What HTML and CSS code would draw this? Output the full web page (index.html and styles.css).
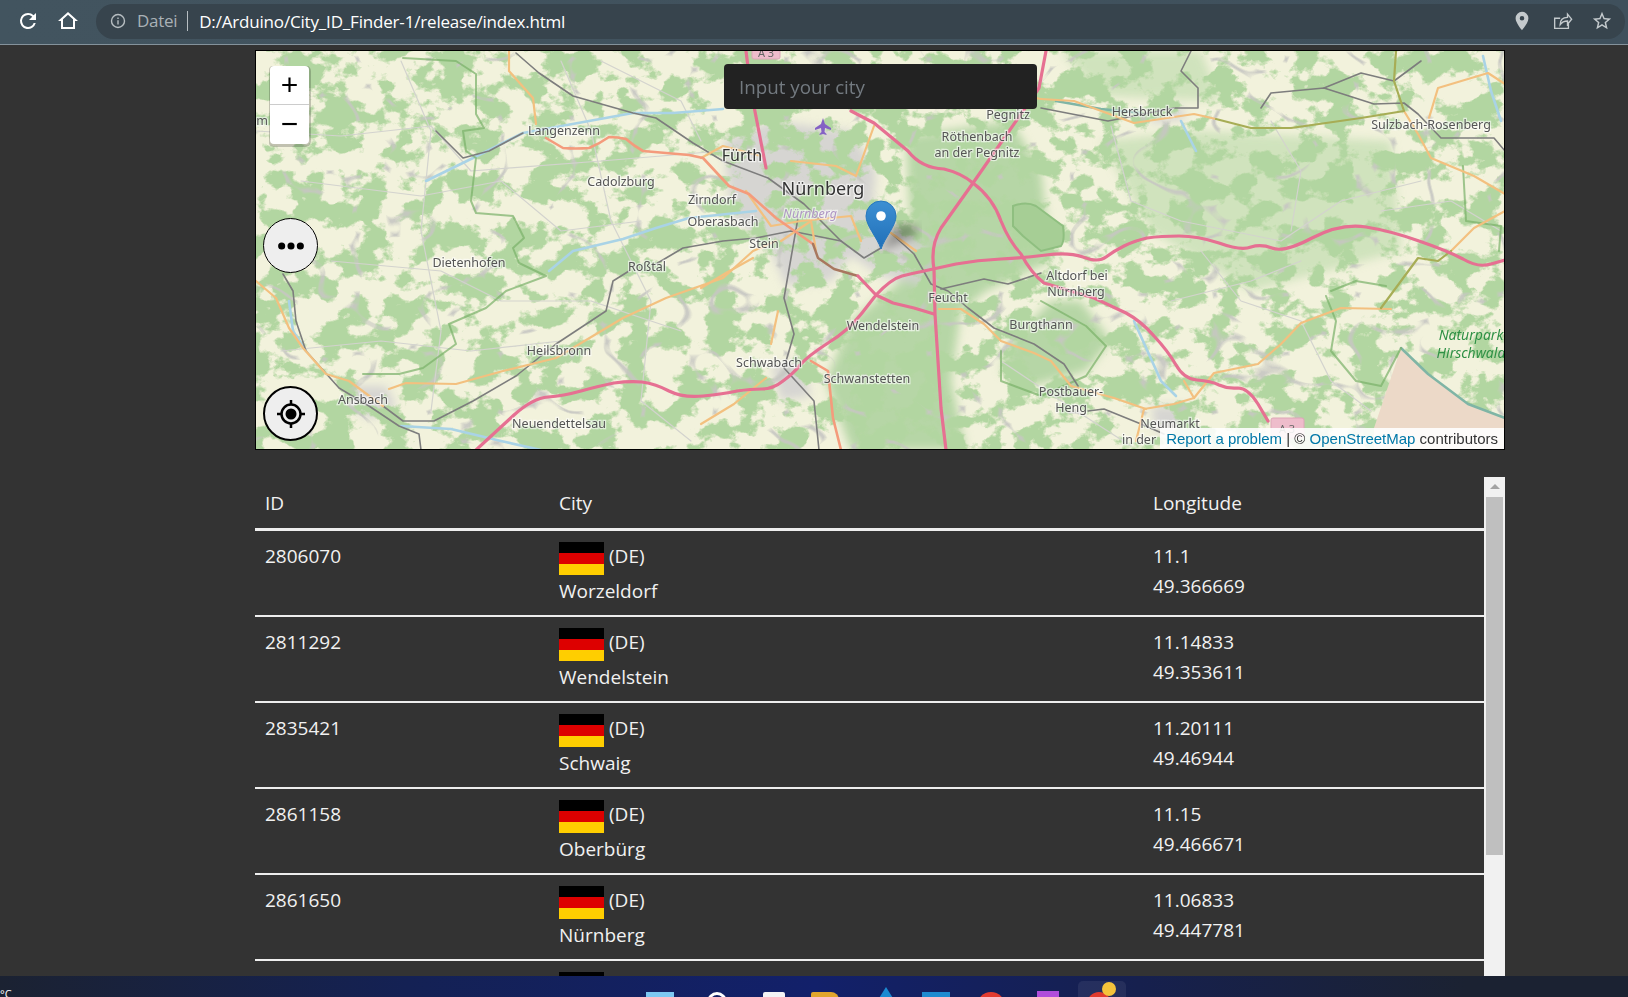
FILE: index.html
```html
<!DOCTYPE html>
<html lang="en">
<head>
    <meta charset="UTF-8">
    <title>City ID Finder</title>
    <link rel="stylesheet" href="styles.css">
</head>
<body>

<header class="toolbar">
    <svg class="tool-icon reload" viewBox="0 0 24 24"><path d="M17.65 6.35A7.95 7.95 0 0 0 12 4a8 8 0 1 0 7.73 10h-2.08A6 6 0 1 1 12 6c1.66 0 3.14.69 4.22 1.78L13 11h7V4l-2.35 2.35z"/></svg>
    <svg class="tool-icon home" viewBox="0 0 24 24"><path d="M12 5.7l5 4.5V18H7v-7.8l5-4.5M12 3L2 12h3v8h14v-8h3L12 3z"/></svg>
    <div class="omnibox">
        <svg class="info-icon" viewBox="0 0 16 16"><circle cx="8" cy="8" r="6.5"/><path d="M8 4.4v1.6M8 7.2v4.4"/></svg>
        <span class="scheme">Datei</span>
        <span class="url">D:/Arduino/City_ID_Finder-1/release/index.html</span>
        <span class="omni-actions">
            <svg class="omni-icon" viewBox="0 0 24 24"><path d="M12 2a7 7 0 0 0-7 7c0 5.2 7 13 7 13s7-7.800 7-13a7 7 0 0 0-7-7zm0 9.500a2.500 2.500 0 1 1 0-5 2.500 2.500 0 0 1 0 5z"/></svg>
            <svg class="omni-icon" viewBox="0 0 24 24"><path class="icon-line" d="M19 14v6H4V9h6M10 16c0-5 3-8 8-8V4.500l4.500 5.500-4.500 5.500V12c-3.500 0-6 1-8 4z"/></svg>
            <svg class="omni-icon" viewBox="0 0 24 24"><path d="M22 9.240l-7.190-.62L12 2 9.190 8.630 2 9.240l5.460 4.730L5.820 21 12 17.270 18.180 21l-1.630-7.030L22 9.240zM12 15.400l-3.760 2.270 1-4.280-3.320-2.880 4.380-.38L12 6.100l1.710 4.040 4.380.38-3.320 2.880 1 4.280L12 15.400z"/></svg>
        </span>
    </div>
</header>

<main class="content">
    <section class="map">
        <svg class="map-canvas" viewBox="255 50 1248 398">
            <defs>
                <filter id="woods" x="0" y="0" width="100%" height="100%" color-interpolation-filters="sRGB">
                    <feTurbulence type="fractalNoise" baseFrequency="0.034 0.04" numOctaves="5" seed="11"/>
                    <feColorMatrix values="0 0 0 0 0.70  0 0 0 0 0.84  0 0 0 0 0.63  12 0 0 0 -5.700"/>
                    <feGaussianBlur stdDeviation="0.6"/>
                </filter>
                <filter id="lanes" x="0" y="0" width="100%" height="100%" color-interpolation-filters="sRGB">
                    <feTurbulence type="turbulence" baseFrequency="0.014 0.017" numOctaves="2" seed="4"/>
                    <feColorMatrix values="0 0 0 0 0.78  0 0 0 0 0.78  0 0 0 0 0.76  0 0 0 -18 1.300"/>
                </filter>
                <filter id="soft"><feGaussianBlur stdDeviation="5"/></filter>
                <filter id="edge"><feGaussianBlur stdDeviation="5"/></filter>
                <filter id="fuzz"><feGaussianBlur stdDeviation="0.4"/></filter>
                <linearGradient id="pin" x1="0" y1="0" x2="0" y2="1">
                    <stop offset="0" stop-color="#3c8fd3"/>
                    <stop offset="1" stop-color="#2170b8"/>
                </linearGradient>
            </defs>

            <rect class="land" x="255" y="50" width="1249" height="399"/>

            <!-- big forest and town areas -->
            <g filter="url(#edge)">
                <path class="forest" d="M905 135 L1010 120 L1040 170 L1050 260 L985 290 L960 310 L950 380 L965 449 L850 449 L825 380 L850 320 L900 280 L910 230 Z"/>
                <path class="forest light" d="M1200 130 L1390 140 L1400 250 L1250 290 L1150 230 L1100 140 Z"/>
                <path class="forest light" d="M1060 50 L1200 50 L1220 100 L1100 95 Z"/>
                <path class="forest" d="M1050 300 L1080 300 L1110 340 L1085 370 L1030 385 L1000 370 L1010 340 Z"/>
                <path class="town" d="M722 140 L770 120 L850 130 L875 170 L872 205 L925 245 L925 285 L880 275 L850 255 L830 280 L785 285 L770 250 L730 215 Z"/>
                <path class="town" d="M352 385 L385 385 L395 405 L370 418 L345 405 Z"/>
                <path class="town" d="M1150 405 L1190 405 L1185 432 L1155 432 Z"/>
                <path class="town" d="M1150 108 L1180 105 L1185 118 L1150 122 Z"/>
                <path class="town" d="M770 365 L800 360 L810 395 L780 400 Z"/>
            </g>
            <rect x="255" y="50" width="1249" height="399" filter="url(#woods)"/>
            <rect class="lane-layer" x="255" y="50" width="1249" height="399" filter="url(#lanes)"/>
            <path class="forest dark" d="M1012 205 Q1025 200 1035 205 L1062 225 Q1064 240 1060 245 L1040 250 L1022 235 L1012 225 Z"/>
            <path class="park" d="M1373 427 L1400 347 L1427 373 L1467 403 L1504 417 L1504 449 L1373 449 Z"/>

            <g class="roads" filter="url(#fuzz)">
                <path class="minor" d="M255 130 L340 135 L430 125 L470 170 L600 160 L720 150"/>
                <path class="minor" d="M300 180 L420 195 L500 180 L560 230 L640 220"/>
                <path class="minor" d="M330 260 L440 270 L500 300 L590 300 L680 330"/>
                <path class="minor" d="M280 350 L380 340 L470 350 L560 340"/>
                <path class="minor" d="M560 60 L590 130 L610 220 L650 300 L640 400 L690 440"/>
                <path class="minor" d="M400 60 L430 130 L420 230 L440 330 L430 410"/>
                <path class="minor" d="M600 60 L680 100 L700 140"/>
                <path class="minor" d="M1110 125 L1130 200 L1180 220 L1280 240 L1340 200 L1420 180"/>
                <path class="minor" d="M1200 250 L1240 300 L1300 320 L1330 380 L1370 410"/>
                <path class="minor" d="M1270 120 L1300 170 L1290 230"/>
                <path class="minor" d="M1380 210 L1450 200 L1500 230"/>
                <path class="minor" d="M1170 300 L1250 280 L1300 260"/>
                <path class="minor" d="M1000 360 L1060 400 L1130 445"/>

                <path class="river" d="M425 180 L472 157 L522 132 L588 120 L632 112 L672 112 L722 108"/>
                <path class="river" d="M548 270 L572 250 L622 238 L655 227 L688 217 L755 210"/>
                <path class="river" d="M288 300 L292 330 L305 350"/>
                <path class="river" d="M400 425 L450 428 L500 440 L540 449"/>
                <path class="river" d="M1133 320 L1160 380 L1175 395"/>
                <path class="river" d="M1180 120 L1190 140 L1195 150"/>
                <path class="river" d="M1482 55 L1490 90 L1500 120"/>
                <path class="river teal" d="M1400 347 L1427 373 L1467 403 L1504 417"/>
                <path class="river teal" d="M1055 100 L1100 108 L1140 112"/>

                <path class="boundary" d="M402 57 L455 60 L475 73 L475 113 L483 127 L462 130 L465 150 L475 157 L470 200 L475 212 L512 215 L523 237 L512 247 L518 262 L545 275 L505 290 L485 307 L448 323 L455 343 L422 367 L398 373 L362 373"/>
                <path class="boundary" d="M1462 165 L1465 220 L1500 225 L1498 250"/>
                <path class="boundary" d="M1330 290 L1355 280 L1385 285 M1325 295 L1335 320 L1330 350 L1355 380 L1380 385 L1400 347"/>
                <path class="boundary" d="M1040 300 L1085 325 L1105 345 L1085 375 L1040 395 L1000 380 L1000 350"/>

                <path class="rail" d="M515 52 L538 72 L572 95 L632 112 L655 117 L692 142 L722 160 L767 177 L803 203 L840 240 L863 257 L880 247"/>
                <path class="rail" d="M435 130 L462 157 L488 150 L522 132"/>
                <path class="rail" d="M382 405 L402 420 L433 420 L472 400 L515 375 L555 343 L605 310 L612 280 L628 270"/>
                <path class="rail" d="M655 263 L682 247 L722 240 L755 237 L790 230 L840 240"/>
                <path class="rail" d="M282 273 L292 290 L295 320 L305 350 L338 387 L368 405 L398 425 L418 433 L420 449"/>
                <path class="rail" d="M890 232 L913 253 L930 283 L947 290 L967 307 L993 327 L1033 343 L1063 363 L1077 385"/>
                <path class="rail" d="M940 288 L983 278 L1007 283 L1040 272"/>
                <path class="rail" d="M797 217 L783 297 L793 333 L783 367 L813 400 L818 449"/>
                <path class="rail" d="M1087 410 L1103 408 L1140 423 L1163 433"/>
                <path class="rail" d="M1040 107 L1107 120 L1173 107 L1197 107 L1197 87 L1180 70 L1190 50"/>
                <path class="rail" d="M1260 107 L1270 92 L1323 87 L1373 103 L1403 102 L1417 113 L1440 137 L1493 137 L1504 150"/>
                <path class="rail" d="M1323 87 L1360 72 L1393 80 L1420 60"/>

                <path class="primary" d="M255 280 L275 297 L288 327 L302 347 L325 373 L348 380 L382 405"/>
                <path class="primary" d="M388 388 L405 382 L455 383 L502 370 L555 357 L622 317 L665 297 L722 277 L752 250 L775 240"/>
                <path class="primary" d="M508 50 L508 70 L532 97 L535 123"/>
                <path class="primary" d="M765 377 L733 403 L700 423"/>
                <path class="primary" d="M752 257 L725 272 L700 287"/>
                <path class="primary" d="M777 310 L770 343"/>
                <path class="primary" d="M700 157 L722 145 L760 155 M745 190 L770 225 L800 220 L850 215 L860 240"/>
                <path class="primary" d="M790 160 L835 165 L855 175 L873 125"/>
                <path class="primary" d="M780 240 L810 220 L815 250"/>
                <path class="primary" d="M938 308 L960 308 L983 323 L1000 340 L1033 352 L1050 360 L1070 385 L1113 397 L1145 408"/>
                <path class="primary" d="M890 232 L915 250"/>
                <path class="primary" d="M1040 98 L1073 100 L1133 122 L1193 113 L1215 118"/>
                <path class="primary" d="M1403 110 L1417 133 L1430 157 L1473 175 L1504 193"/>
                <path class="primary" d="M1428 117 L1437 87 L1487 72 L1504 83"/>
                <path class="primary" d="M1143 408 L1173 403 L1193 397 L1213 372 L1257 363 L1280 343 L1300 322 L1340 307 L1390 308"/>
                <path class="primary" d="M1183 380 L1193 397"/>
                <path class="primary" d="M1143 408 L1135 440"/>
                <path class="primary" d="M1450 250 L1473 227 L1504 210"/>
                <path class="primary" d="M1000 90 L1040 98"/>

                <path class="trunk" d="M545 137 L562 147 Q575 148 588 147 Q598 143 608 136 Q617 136 625 138 Q633 145 642 150 L688 154 L702 157 L728 185 L748 193 L775 217 L812 243"/>
                <path class="trunk" d="M810 360 L827 370 L832 417 L840 449"/>
                <path class="brown" d="M812 243 L817 257 L833 268 L857 275"/>
                <path class="olive" d="M1215 118 L1250 127 L1290 127 L1360 117 L1403 110 L1393 80 L1395 50"/>
                <path class="olive" d="M1380 307 L1417 257 L1437 260 L1450 250"/>

                <path class="motorway" d="M475 449 L513 414 Q532 397 547 396 Q562 395 580 390 Q598 385 613 382 Q628 380 641 381 Q655 383 668 390 Q682 397 702 395 Q722 393 736 390 Q750 388 761 388 Q772 388 782 380 Q793 372 800 363 Q807 355 827 342 Q847 330 861 312 L875 294 L857 275"/>
                <path class="motorway" d="M875 294 L892 302 L913 307 L933 313"/>
                <path class="motorway" d="M875 294 Q890 278 901 275 Q913 272 923 270 L955 263 Q977 259 1000 258 Q1022 257 1045 254 Q1067 251 1082 256 Q1097 262 1105 256 Q1113 250 1123 245 Q1133 240 1146 237 Q1160 235 1178 235 Q1197 235 1218 242 Q1240 250 1250 246 Q1260 243 1271 247 Q1283 252 1311 237 Q1340 222 1365 226 Q1390 230 1418 240 Q1447 250 1462 258 Q1477 267 1490 263 L1504 259"/>
                <path class="motorway" d="M1045 50 L1038 87 L972 182 L940 227 Q929 245 933 268 L934 313 L940 407 L945 449"/>
                <path class="motorway" d="M850 110 L873 122 L907 150 Q920 167 943 168 Q960 172 972 182 Q992 197 1000 220 Q1008 240 1020 253 Q1030 272 1043 282 L1093 297 L1125 312 Q1140 320 1153 335 Q1167 350 1175 364 Q1183 378 1196 379 Q1210 380 1218 384 Q1227 388 1237 387 Q1247 387 1257 403 L1267 420"/>
                <path class="motorway" d="M745 50 L750 90 L765 167"/>
            </g>

            <g class="shield"><rect x="751" y="44" width="28" height="14" rx="2"/><text x="765" y="56">A 3</text></g>
            <g class="shield"><rect x="1270" y="417" width="33" height="20" rx="2"/><text x="1286" y="432">A 3</text></g>
            <path class="plane" d="M822 117 L824 123 L830 127 L830 129 L824 127 L823.500 131 L825.500 133 L825.500 134 L822 133 L818.500 134 L818.500 133 L820.500 131 L820 127 L814 129 L814 127 L820 123 Z"/>

            <g class="labels">
                <text x="563" y="134">Langenzenn</text>
                <text x="620" y="185">Cadolzburg</text>
                <text x="711" y="203">Zirndorf</text>
                <text x="722" y="225">Oberasbach</text>
                <text x="763" y="247">Stein</text>
                <text x="468" y="266">Dietenhofen</text>
                <text x="646" y="270">Roßtal</text>
                <text x="558" y="354">Heilsbronn</text>
                <text x="362" y="403">Ansbach</text>
                <text x="558" y="427">Neuendettelsau</text>
                <text x="768" y="366">Schwabach</text>
                <text x="866" y="382">Schwanstetten</text>
                <text x="882" y="329">Wendelstein</text>
                <text x="947" y="301">Feucht</text>
                <text x="1040" y="328">Burgthann</text>
                <text x="1076" y="279">Altdorf bei</text>
                <text x="1075" y="295">Nürnberg</text>
                <text x="1070" y="395">Postbauer-</text>
                <text x="1070" y="411">Heng</text>
                <text x="1169" y="427">Neumarkt</text>
                <text x="1138" y="443">in der</text>
                <text x="976" y="140">Röthenbach</text>
                <text x="976" y="156">an der Pegnitz</text>
                <text x="1007" y="118">Pegnitz</text>
                <text x="1141" y="115">Hersbruck</text>
                <text x="1430" y="128">Sulzbach-Rosenberg</text>
                <text x="261" y="124">m</text>
                <text class="city mid" x="741" y="160">Fürth</text>
                <text class="city" x="822" y="194">Nürnberg</text>
                <text class="area" x="809" y="217">Nürnberg</text>
                <text class="nature" x="1470" y="339">Naturpark</text>
                <text class="nature" x="1470" y="357">Hirschwald</text>
            </g>

            <!-- marker -->
            <path class="marker-shadow" d="M880 250 L915 235 C922 224 905 218 893 226 Z" filter="url(#soft)"/>
            <path class="marker-pin" d="M880 248 C876 236 865 225 865 215 A15 15 0 0 1 895 215 C895 225 884 236 880 248 Z"/>
            <circle class="marker-dot" cx="880" cy="215" r="4.800"/>
        </svg>

        <div class="zoom-bar">
            <div class="zoom-btn">+</div>
            <div class="zoom-btn">&minus;</div>
        </div>
        <input class="city-search" type="text" placeholder="Input your city">
        <button class="round-btn more-btn">
            <svg viewBox="0 0 30 10"><circle cx="5" cy="5" r="3.800"/><circle cx="15" cy="5" r="3.800"/><circle cx="25" cy="5" r="3.800"/></svg>
        </button>
        <button class="round-btn locate-btn">
            <svg viewBox="0 0 30 30"><circle class="ring" cx="15" cy="15" r="9.500"/><circle cx="15" cy="15" r="5.500"/><path class="ring" d="M15 1v5M15 24v5M1 15h5M24 15h5"/></svg>
        </button>
        <div class="attribution"><a href="#">Report a problem</a> | © <a href="#">OpenStreetMap</a> contributors</div>
    </section>

    <section class="results">
        <table class="city-table">
            <thead>
                <tr><th class="col-id">ID</th><th class="col-city">City</th><th>Longitude</th></tr>
            </thead>
            <tbody>
                <tr>
                    <td>2806070</td>
                    <td><div class="country"><span class="flag"></span>(DE)</div><div>Worzeldorf</div></td>
                    <td><div>11.1</div><div>49.366669</div></td>
                </tr>
                <tr>
                    <td>2811292</td>
                    <td><div class="country"><span class="flag"></span>(DE)</div><div>Wendelstein</div></td>
                    <td><div>11.14833</div><div>49.353611</div></td>
                </tr>
                <tr>
                    <td>2835421</td>
                    <td><div class="country"><span class="flag"></span>(DE)</div><div>Schwaig</div></td>
                    <td><div>11.20111</div><div>49.46944</div></td>
                </tr>
                <tr>
                    <td>2861158</td>
                    <td><div class="country"><span class="flag"></span>(DE)</div><div>Oberbürg</div></td>
                    <td><div>11.15</div><div>49.466671</div></td>
                </tr>
                <tr>
                    <td>2861650</td>
                    <td><div class="country"><span class="flag"></span>(DE)</div><div>Nürnberg</div></td>
                    <td><div>11.06833</div><div>49.447781</div></td>
                </tr>
                <tr>
                    <td></td>
                    <td><div class="country"><span class="flag"></span></div></td>
                    <td></td>
                </tr>
            </tbody>
        </table>
        <div class="scrollbar">
            <div class="scroll-up"></div>
            <div class="scroll-thumb"></div>
        </div>
    </section>
</main>

<footer class="taskbar">
    <span class="weather">°C</span>
    <div class="task-icons">
        <span class="task-icon win"></span>
        <span class="task-icon search"></span>
        <span class="task-icon files"></span>
        <span class="task-icon folder"></span>
        <span class="task-icon drop"></span>
        <span class="task-icon store"></span>
        <span class="task-icon red"></span>
        <span class="task-icon purple"></span>
        <span class="task-icon active"><span class="red-dot"></span><span class="sun"></span></span>
    </div>
</footer>

</body>
</html>
```

FILE: styles.css
```css
* {
    box-sizing: border-box;
}

body {
    margin: 0;
    height: 100vh;
    overflow: hidden;
    display: flex;
    flex-direction: column;
    background-color: #333;
    color: #f1f1f1;
    font-family: 'Open Sans', sans-serif;
}

/* Browser bar */
.toolbar {
    height: 45px;
    flex-shrink: 0;
    display: flex;
    align-items: center;
    padding: 0 3px 2px 16px;
    background: linear-gradient(90deg, #42545f, #3f505c);
    border-bottom: 1px solid #84929b;
}

.tool-icon {
    width: 24px;
    height: 24px;
    fill: #fff;
    flex-shrink: 0;
}

.home {
    margin-left: 16px;
    margin-right: 16px;
}

.omnibox {
    flex: 1;
    height: 35px;
    display: flex;
    align-items: center;
    padding: 0 12px 0 14px;
    border-radius: 18px;
    background-color: #37444d;
    font-size: 17px;
}

.info-icon {
    width: 16px;
    height: 16px;
    fill: none;
    stroke: #b7bec2;
    stroke-width: 1.400;
}

.scheme {
    margin-left: 11px;
    padding-right: 10px;
    border-right: 1px solid #b7bec2;
    line-height: 20px;
    color: #a9b1b6;
    letter-spacing: -0.300px;
}

.url {
    margin-left: 11px;
    color: #fff;
    letter-spacing: -0.180px;
}

.omni-actions {
    margin-left: auto;
    display: flex;
    gap: 18px;
}

.omni-icon {
    width: 22px;
    height: 22px;
    fill: #c4cacd;
}

.icon-line {
    fill: none;
    stroke: #c4cacd;
    stroke-width: 1.500;
}

/* Page */
.content {
    flex: 1;
    min-height: 0;
    width: 1250px;
    margin-left: 255px;
    padding-top: 5px;
    display: flex;
    flex-direction: column;
    gap: 27px;
}

/* Map */
.map {
    position: relative;
    height: 400px;
    width: 1250px;
    flex-shrink: 0;
    border: 1px solid #000;
    overflow: hidden;
}

.map-canvas {
    display: block;
    width: 100%;
    height: 100%;
}

.land { fill: #f2f2dc; }
.forest { fill: #b6d6a6; }
.forest.light { fill: #b9d8a9; opacity: 0.6; }
.forest.dark { fill: #a6ce95; stroke: #8fbf80; stroke-width: 2; }
.park { fill: #ecd9c8; }
.town { fill: #d3d2d0; opacity: 0.9; }
.lane-layer { opacity: 0.9; }

.roads path {
    fill: none;
    stroke-linejoin: round;
    stroke-linecap: round;
}

.minor { stroke: #d3d3ce; stroke-width: 1.200; }
.river { stroke: #a9d3e6; stroke-width: 2.600; }
.river.teal { stroke: #7fb5a5; stroke-width: 2.500; }
.boundary { stroke: #79b068; stroke-width: 2; opacity: 0.7; }
.rail { stroke: #7d7d7d; stroke-width: 1.600; }
.primary { stroke: #f3c07f; stroke-width: 2.200; }
.trunk { stroke: #f49b7c; stroke-width: 2.600; }
.brown { stroke: #a8775f; stroke-width: 2.400; }
.olive { stroke: #a7ad55; stroke-width: 2.200; }
.motorway { stroke: #e66f92; stroke-width: 3.200; }

.shield rect { fill: #eebccb; stroke: #dca6b7; }
.shield text {
    font: 11px 'Noto Sans', sans-serif;
    fill: #666;
    text-anchor: middle;
}

.plane { fill: #8461c4; }

.labels text {
    font: 12.500px 'Noto Sans', sans-serif;
    fill: #555;
    text-anchor: middle;
    stroke: rgba(255, 255, 255, 0.6);
    stroke-width: 2.500px;
    paint-order: stroke;
}

.labels .city {
    font-size: 18px;
    fill: #333;
}

.labels .mid {
    font-size: 16px;
}

.labels .area {
    font-style: italic;
    fill: #ae95c4;
}

.labels .nature {
    font-size: 14px;
    font-style: italic;
    fill: #2f9145;
    stroke: none;
}

.marker-shadow { fill: rgba(0, 0, 0, 0.32); }
.marker-pin { fill: url(#pin); stroke: #2677bd; }
.marker-dot { fill: #fff; }

.zoom-bar {
    position: absolute;
    left: 14px;
    top: 15px;
    width: 39px;
    height: 78px;
    background-color: #fff;
    border-radius: 4px;
    box-shadow: 0 1px 0 2px rgba(0, 0, 0, 0.2);
    clip-path: inset(0 -2px -3px -1px round 4px);
}

.zoom-btn {
    height: 39px;
    text-align: center;
    font: 30px/38px 'Liberation Sans', sans-serif;
    color: #000;
    border-bottom: 1px solid #ccc;
}

.zoom-btn:last-child {
    border-bottom: none;
}

.city-search {
    position: absolute;
    left: 468px;
    top: 13px;
    width: 313px;
    height: 45px;
    padding: 0 15px;
    border: none;
    border-radius: 4px;
    background-color: #222;
    color: #fff;
    font-family: 'Open Sans', sans-serif;
    font-size: 18.800px;
}

.city-search::placeholder {
    color: #737a80;
    opacity: 1;
}

.round-btn {
    position: absolute;
    left: 7px;
    width: 55px;
    height: 55px;
    padding: 0;
    display: flex;
    align-items: center;
    justify-content: center;
    border: 1.500px solid #000;
    border-radius: 50%;
    background-color: #eee;
}

.more-btn {
    top: 167px;
}

.more-btn svg {
    width: 28px;
    height: 10px;
}

.locate-btn {
    top: 335px;
    border-width: 2px;
}

.locate-btn svg {
    width: 30px;
    height: 30px;
}

.locate-btn .ring {
    fill: none;
    stroke: #000;
    stroke-width: 2.500;
}

.attribution {
    position: absolute;
    right: 0;
    bottom: 0;
    height: 21px;
    padding: 0 6px 0 6px;
    background-color: rgba(255, 255, 255, 0.88);
    font: 15px/21px 'Liberation Sans', sans-serif;
    color: #333;
}

.attribution a {
    color: #0078a8;
    text-decoration: none;
}

/* Results table */
.results {
    flex: 1;
    min-height: 0;
    display: flex;
    overflow: hidden;
}

.city-table {
    flex: 1;
    align-self: flex-start;
    width: 1229px;
    table-layout: fixed;
    border-collapse: collapse;
    font-size: 19px;
}

.col-id {
    width: 294px;
}

.col-city {
    width: 594px;
}

th {
    height: 52px;
    padding: 1px 10px 0;
    text-align: left;
    font-weight: 400;
    border-bottom: 3px solid #eee;
}

td {
    height: 86px;
    padding: 10px 10px 8px;
    vertical-align: top;
    line-height: 30px;
    border-bottom: 2px solid #eee;
}

tbody tr:first-child td {
    height: 87px;
}

.country {
    height: 35px;
    display: flex;
    align-items: flex-start;
    gap: 5px;
}

.flag {
    width: 45px;
    height: 33px;
    margin-top: 1px;
    background: linear-gradient(#000 33.300%, #d00 33.300%, #d00 66.600%, #ffce00 66.600%);
}

.scrollbar {
    width: 21px;
    flex-shrink: 0;
    background-color: #f1f1f1;
}

.scroll-up {
    height: 20px;
    padding-top: 7px;
}

.scroll-up::before {
    content: "";
    display: block;
    width: 0;
    margin: 0 auto;
    border: 5px solid transparent;
    border-top: none;
    border-bottom-color: #a3a3a3;
}

.scroll-thumb {
    height: 358px;
    margin: 0 2px;
    background-color: #bfbfbf;
}

/* Windows taskbar */
.taskbar {
    height: 21px;
    flex-shrink: 0;
    position: relative;
    overflow: hidden;
    background: linear-gradient(90deg, #1b2232, #142154 25%, #12206a 50%, #16204e 70%, #1b2232 90%);
}

.weather {
    display: block;
    font-size: 11px;
    line-height: 11px;
    margin-top: 12px;
    color: #fff;
}

.task-icons {
    position: absolute;
    top: 0;
    left: 646px;
    display: flex;
    gap: 29px;
}

.task-icon {
    width: 28px;
    height: 40px;
    flex-shrink: 0;
    display: block;
    position: relative;
}

.task-icon.win { margin-top: 16px; background: #7cc8f2; }
.task-icon.search { margin-top: 16px; width: 20px; height: 20px; margin-left: 4px; margin-right: 4px; border: 3px solid #fff; border-radius: 50%; }
.task-icon.files { margin-top: 16px; width: 22px; margin-left: 3px; margin-right: 3px; background: #f3f3f5; border-radius: 2px; }
.task-icon.folder { margin-top: 16px; margin-left: -6px; background: #e0a52c; border-radius: 2px 8px 0 0; }
.task-icon.drop { margin-top: 11px; width: 20px; margin-left: 8px; margin-right: 4px; background: #1b8ad2; clip-path: polygon(50% 0, 100% 40%, 100% 100%, 0 100%, 0 40%); }
.task-icon.store { margin-top: 16px; margin-left: -7px; background: #1f8bd0; }
.task-icon.red { margin-top: 16px; margin-left: -2px; background: #e23b30; border-radius: 50%; height: 28px; }
.task-icon.purple { margin-top: 15px; width: 22px; margin-left: 3px; margin-right: 3px; background: #b04ddb; }

.task-icon.active {
    width: 48px;
    height: 40px;
    margin-top: 5px;
    margin-left: -13px;
    background: rgba(255, 255, 255, 0.07);
    border-radius: 5px;
}

.red-dot {
    position: absolute;
    left: 9px;
    top: 11px;
    width: 24px;
    height: 24px;
    border-radius: 50%;
    background: #e03a2e;
}

.sun {
    position: absolute;
    left: 24px;
    top: 1px;
    width: 14px;
    height: 14px;
    border-radius: 50%;
    background: #f5c33b;
}
```
